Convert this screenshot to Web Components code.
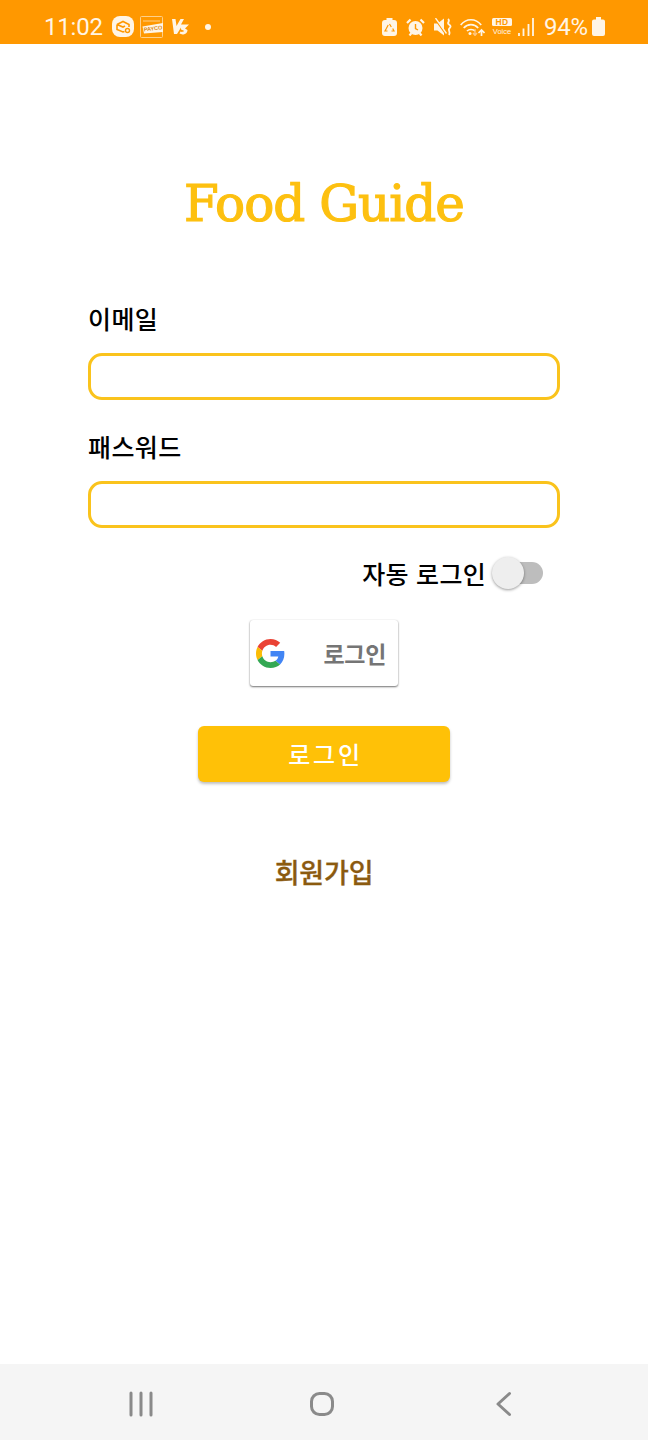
<!DOCTYPE html>
<html lang="ko">
<head>
<meta charset="utf-8">
<title>Food Guide</title>
<style>
  html, body { margin: 0; height: 100%; background: #fff; }
  body { display: flex; flex-direction: column; height: 1440px; font-family: Roboto, "Noto Sans CJK KR", sans-serif; }
</style>
</head>
<body>
<status-bar></status-bar>
<login-page>
  <form-field label="이메일"></form-field>
  <form-field label="패스워드"></form-field>
  <auto-login>자동 로그인</auto-login>
  <google-button>로그인</google-button>
  <primary-button>로그인</primary-button>
  <text-link>회원가입</text-link>
</login-page>
<nav-bar></nav-bar>

<script>
const KR = '"Noto Sans CJK KR", "Noto Sans", sans-serif'

// everything in the status bar is the same off-white
const INK = '#fff5e6'
const BAR = '#ff9800'

class StatusBar extends HTMLElement {
  constructor() {
    super()
    this.attachShadow({ mode: 'open' })
    this.shadowRoot.innerHTML = `
      <style>
        :host { display: flex; align-items: center; height: 44px; background: ${BAR}; color: ${INK}; padding: 9px 43px 0 44px; box-sizing: border-box; flex: none; font-family: Roboto, sans-serif; }
        svg { display: block; flex: none; }
        .time { font-size: 24px; letter-spacing: -.2px; margin-right: 9px; }
        .left, .right { display: flex; align-items: center; }
        .right { margin-left: auto; }
        .pct { font-size: 24px; letter-spacing: -.2px; }
        .hd { display: flex; flex-direction: column; align-items: center; width: 20px; }
        .hd b { background: ${INK}; color: ${BAR}; font: 700 8.500px/8px "Liberation Sans", sans-serif; width: 20px; height: 8px; text-align: center; border-radius: 1.500px; letter-spacing: .5px; }
        .hd i { font: 7.500px/7px "Liberation Sans", sans-serif; margin-top: 2px; }
      </style>
      <div class="left">
        <span class="time">11:02</span>
        <svg width="22" height="21" viewBox="0 0 22 21">
          <rect width="22" height="21" rx="8" fill="${INK}"/>
          <path d="M5 8.500l6-3 6 3v2.500M5 8.500v5l6 2.500 1.500-.5M5 8.500l6 2.500 2-1" fill="none" stroke="${BAR}" stroke-width="1.600"/>
          <circle cx="15.500" cy="14.500" r="2" fill="none" stroke="${BAR}" stroke-width="1.400"/>
        </svg>
        <svg style="margin-left:6px" width="23" height="22" viewBox="0 0 23 22">
          <rect x=".5" y=".5" width="22" height="21" rx="1" fill="none" stroke="#ffd08a"/>
          <path d="M3 5h17" stroke="#ffd08a"/>
          <path d="M2.500 10.500L23 7v9l-19 1.500z" fill="${INK}"/>
          <text x="4" y="15.500" transform="rotate(-7 4 15.500)" font-family="Liberation Sans" font-size="5.500" font-weight="700" fill="#d98a1a">PAYCO</text>
        </svg>
        <svg style="margin-left:9px" width="17" height="17" viewBox="0 0 17 17">
          <path d="M0 1h3.500l1 7 4-7H12L9 6.500h8l-4 4 2.500 1.500c0 3-2.500 4.500-5 4.500l-3-1 1-2c1 .6 3 .6 3.500-.8L9 11.500V9.500L5 16H2z" fill="${INK}"/>
        </svg>
        <svg style="margin-left:16px" width="6" height="6"><circle cx="3" cy="3" r="3" fill="${INK}"/></svg>
      </div>
      <div class="right">
        <svg width="15" height="18" viewBox="0 0 15 18">
          <path d="M4.500 0h6v2h1.500a3 3 0 0 1 3 3v10a3 3 0 0 1-3 3H3a3 3 0 0 1-3-3V5a3 3 0 0 1 3-3h1.500z" fill="${INK}"/>
          <path d="M7.500 6l1.800 3M9.500 13h2.500l-1.300-2.500M5.500 13H3l1.500-2.700L6.200 7" fill="none" stroke="${BAR}" stroke-width="1.200"/>
        </svg>
        <svg style="margin-left:9px" width="19" height="18" viewBox="0 0 19 18">
          <circle cx="9.500" cy="10" r="7" fill="${INK}"/>
          <path d="M9.500 6v4.500l2.500 1.500" fill="none" stroke="${BAR}" stroke-width="1.400"/>
          <path d="M1 5l3.500-3.500M18 5l-3.500-3.500M3.500 17.500l2-2.500M15.500 17.500l-2-2.500" stroke="${INK}" stroke-width="2.200"/>
        </svg>
        <svg style="margin-left:9px" width="18" height="18" viewBox="0 0 18 18">
          <path d="M0 5.500h3.500L10 .5v17l-6.500-5H0z" fill="${INK}"/>
          <path d="M1 1l11 15.500" stroke="${BAR}" stroke-width="1.400"/>
          <path d="M1.500 0l11 15.500" stroke="${INK}" stroke-width="1.300"/>
          <path d="M14 1c3 2.500-2 3.500 1 5.500s1 2.500 0 4.500 2 2.500 0 6" fill="none" stroke="${INK}" stroke-width="1.800"/>
        </svg>
        <svg style="margin-left:8px" width="25" height="18" viewBox="0 0 25 18">
          <path d="M.7 7c5.500-7 15-7 20.500 0M3.700 10c4-4.500 10.500-4.500 14.500 0M7 13c2-2 6-2 8 0" fill="none" stroke="${INK}" stroke-width="1.700"/>
          <circle cx="10" cy="15.500" r="1.500" fill="${INK}"/>
          <path d="M15 11v6m-2-2l2 2.500 2-2.500" fill="none" stroke="#ffc680" stroke-width="1.300"/>
          <path d="M21.500 18v-5.500m-3 2.500l3-3 3 3" fill="none" stroke="${INK}" stroke-width="1.700"/>
        </svg>
        <span class="hd" style="margin-left:7px"><b>HD</b><i>Voice</i></span>
        <svg style="margin-left:6px" width="16" height="18" viewBox="0 0 16 18">
          <path d="M1 15v3M5.500 10.500V18M10.500 6v12M15 0v18" stroke="${INK}" stroke-width="1.800"/>
        </svg>
        <span class="pct" style="margin-left:10px">94%</span>
        <svg style="margin-left:4px" width="13" height="19" viewBox="0 0 13 19">
          <path d="M4 0h5v2.500h2a2 2 0 0 1 2 2V17a2 2 0 0 1-2 2H2a2 2 0 0 1-2-2V4.500a2 2 0 0 1 2-2h2z" fill="${INK}"/>
        </svg>
      </div>`
  }
}

class LoginPage extends HTMLElement {
  constructor() {
    super()
    this.attachShadow({ mode: 'open' })
    this.shadowRoot.innerHTML = `
      <style>
        :host { display: flex; flex-direction: column; flex: 1; padding: 0 88px; box-sizing: border-box; }
        h1 { margin: 125px 0 62px; text-align: center; font: 400 50px/70px "DejaVu Serif", serif; letter-spacing: -1px; color: #fdc010; -webkit-text-stroke: 1.200px #fdc010; }
        .stack { display: flex; flex-direction: column; }
      </style>
      <h1>Food Guide</h1>
      <div class="stack"><slot></slot></div>`
  }
}

class FormField extends HTMLElement {
  constructor() {
    super()
    this.attachShadow({ mode: 'open' })
    this.shadowRoot.innerHTML = `
      <style>
        :host { display: flex; flex-direction: column; height: 128px; }
        label { font: 500 25px/34px ${KR}; color: #000; height: 36px; margin-bottom: 16px; letter-spacing: .4px; }
        .box { height: 47px; box-sizing: border-box; border: 3px solid #fac31c; border-radius: 14px; background: #fff; }
        input { all: unset; display: block; width: 100%; height: 100%; }
      </style>
      <label></label>
      <div class="box"><input></div>`
    this.shadowRoot.querySelector('label').textContent = this.getAttribute('label')
  }
}

class AutoLogin extends HTMLElement {
  constructor() {
    super()
    this.attachShadow({ mode: 'open' })
    this.shadowRoot.innerHTML = `
      <style>
        :host { display: flex; align-items: center; justify-content: flex-end; height: 32px; padding-right: 17px; }
        span { font: 500 25px/32px ${KR}; color: #000; margin-right: 11px; letter-spacing: .3px; }
        .track { position: relative; width: 46px; height: 22px; border-radius: 11px; background: #bdbdbd; }
        .thumb { position: absolute; left: -5px; top: -5px; width: 32px; height: 32px; border-radius: 50%; background: #eee; box-shadow: 0 1px 3px rgba(0,0,0,.4); }
      </style>
      <span><slot></slot></span>
      <div class="track"><div class="thumb"></div></div>`
  }
}

class GoogleButton extends HTMLElement {
  constructor() {
    super()
    this.attachShadow({ mode: 'open' })
    this.shadowRoot.innerHTML = `
      <style>
        :host { display: flex; align-items: center; align-self: center; box-sizing: border-box; width: 148px; height: 66px; margin-top: 31px; padding: 0 12px 0 6px; background: #fff; border-radius: 3px; box-shadow: 0 0 1px rgba(0,0,0,.12), 0 1px 2px rgba(0,0,0,.55); }
        svg { display: block; flex: none; }
        span { margin-left: auto; font: 700 23px/30px ${KR}; color: #757575; letter-spacing: -.3px; }
      </style>
      <svg width="29" height="29" viewBox="0 0 48 48">
        <path fill="#EA4335" d="M24 9.500c3.540 0 6.710 1.220 9.210 3.600l6.850-6.850C35.900 2.380 30.470 0 24 0 14.620 0 6.510 5.380 2.560 13.220l7.980 6.190C12.430 13.720 17.740 9.500 24 9.500z"/>
        <path fill="#4285F4" d="M46.980 24.550c0-1.570-.15-3.090-.38-4.550H24v9.020h12.940c-.58 2.960-2.260 5.480-4.780 7.180l7.730 6c4.510-4.180 7.090-10.360 7.090-17.650z"/>
        <path fill="#FBBC05" d="M10.530 28.590c-.48-1.450-.76-2.990-.76-4.590s.27-3.140.76-4.590l-7.980-6.190C.92 16.460 0 20.120 0 24c0 3.880.92 7.540 2.560 10.780l7.970-6.190z"/>
        <path fill="#34A853" d="M24 48c6.480 0 11.930-2.130 15.890-5.810l-7.730-6c-2.150 1.450-4.920 2.300-8.160 2.300-6.260 0-11.570-4.220-13.470-9.910l-7.980 6.190C6.510 42.620 14.620 48 24 48z"/>
      </svg>
      <span><slot></slot></span>`
  }
}

class PrimaryButton extends HTMLElement {
  constructor() {
    super()
    this.attachShadow({ mode: 'open' })
    this.shadowRoot.innerHTML = `
      <style>
        :host { display: flex; align-items: center; justify-content: center; align-self: center; box-sizing: border-box; width: 252px; height: 56px; padding-left: 3px; margin-top: 40px; background: #ffc107; border-radius: 6px; color: #fff; font: 500 24px/30px ${KR}; letter-spacing: 2.700px; box-shadow: 0 2px 3px rgba(0,0,0,.25); }
      </style>
      <slot></slot>`
  }
}

class TextLink extends HTMLElement {
  constructor() {
    super()
    this.attachShadow({ mode: 'open' })
    this.shadowRoot.innerHTML = `
      <style>
        :host { display: block; align-self: center; margin-top: 72px; color: #8b5a0f; font: 500 27px/36px ${KR}; letter-spacing: -.2px; -webkit-text-stroke: .3px #8b5a0f; }
      </style>
      <slot></slot>`
  }
}

class NavBar extends HTMLElement {
  constructor() {
    super()
    this.attachShadow({ mode: 'open' })
    this.shadowRoot.innerHTML = `
      <style>
        :host { display: flex; align-items: center; flex: none; height: 76px; box-sizing: border-box; padding: 4px 0 0 127px; background: #f5f5f5; }
        svg { display: block; flex: none; }
      </style>
      <svg width="28" height="28" viewBox="0 0 28 28"><path d="M4 3v22M14 3v22M24 3v22" stroke="#8a8a8a" stroke-width="3" stroke-linecap="round"/></svg>
      <svg style="margin-left:154px" width="26" height="26" viewBox="0 0 26 26"><rect x="2.500" y="2.500" width="21" height="21" rx="8" fill="none" stroke="#8a8a8a" stroke-width="3"/></svg>
      <svg style="margin-left:160px" width="18" height="26" viewBox="0 0 18 26"><path d="M14.500 2.500L3 13l11.500 10.500" fill="none" stroke="#8a8a8a" stroke-width="3" stroke-linecap="round" stroke-linejoin="round"/></svg>`
  }
}

customElements.define('status-bar', StatusBar)
customElements.define('login-page', LoginPage)
customElements.define('form-field', FormField)
customElements.define('auto-login', AutoLogin)
customElements.define('google-button', GoogleButton)
customElements.define('primary-button', PrimaryButton)
customElements.define('text-link', TextLink)
customElements.define('nav-bar', NavBar)
</script>
</body>
</html>
